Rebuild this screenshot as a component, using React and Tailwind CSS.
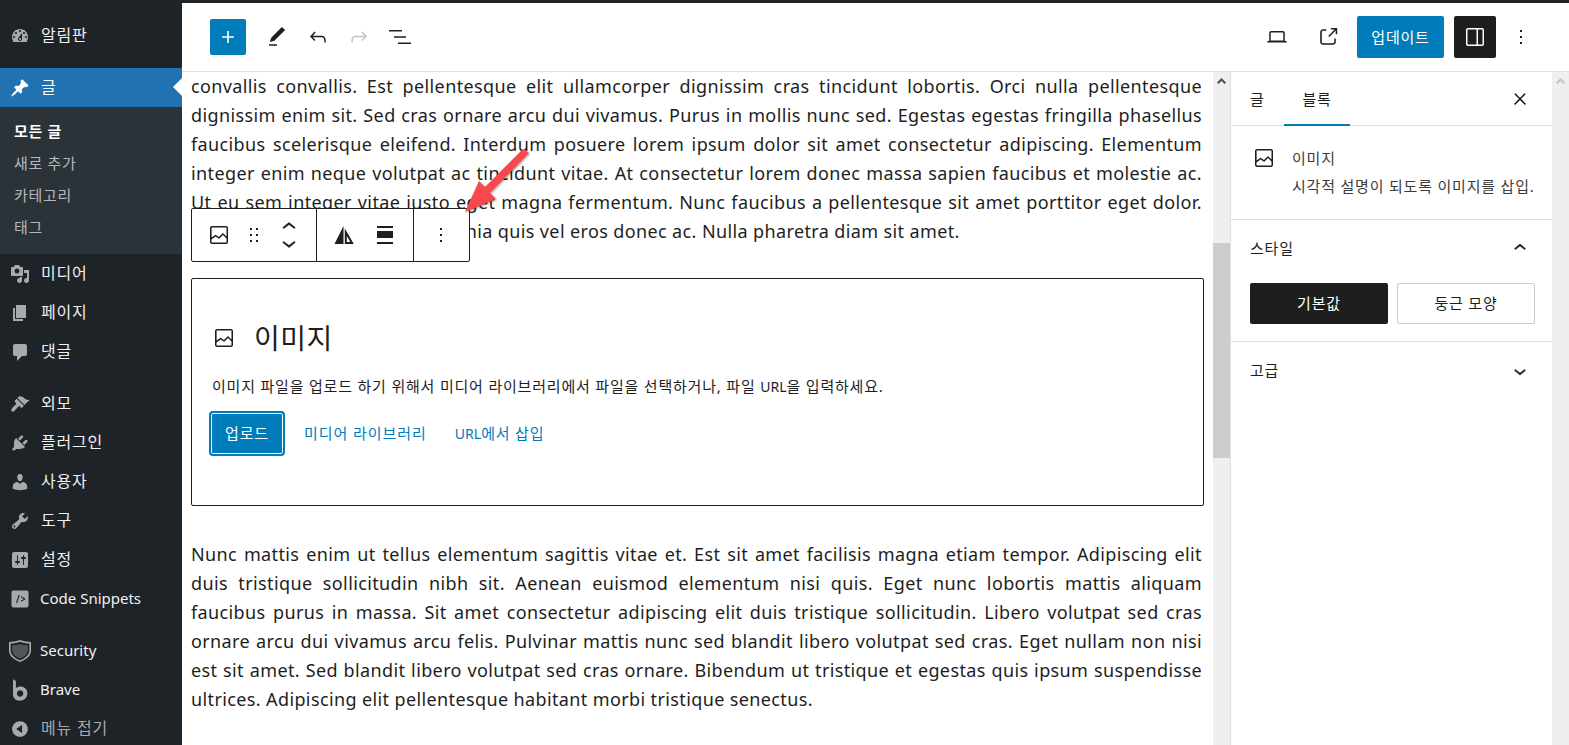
const bodyFont = "font-['Noto_Sans','Noto_Sans_CJK_KR',sans-serif]"

// wp block editor icons, 24 box
const Wp = ({ d, className = 'w-6 h-6', fill = 'currentColor' }) => (
  <svg viewBox="0 0 24 24" className={className} fill={fill} fillRule="evenodd">
    <path d={d} />
  </svg>
)

const icons = {
  plus: 'M18 11.2h-5.2V6h-1.6v5.2H6v1.6h5.2V18h1.6v-5.2H18z',
  pencil: 'M20.1 5.1L16.9 2 6.2 12.7l-1.3 4.4 4.5-1.3L20.1 5.1zM4 20.8h8v-1.5H4v1.5z',
  undo: 'M18.3 11.7c-.6-.6-1.4-.9-2.3-.9H6.7l2.9-3.3-1.1-1-4.5 5L8.5 16l1-1-2.7-2.7H16c.5 0 .9.2 1.3.5 1 1 1 3.4 1 4.5v.3h1.5v-.2c0-1.5 0-4.3-1.5-5.700z',
  redo: 'M15.6 6.5l-1.1 1 2.9 3.3H8c-.9 0-1.7.3-2.3.9-1.4 1.5-1.4 4.2-1.4 5.6v.2h1.5v-.3c0-1.1 0-3.5 1-4.5.3-.3.7-.5 1.3-.5h9.2L14.5 15l1.1 1.1 4.6-4.6-4.6-5z',
  list: 'M1 5h13v1.500H1zM6 11.300h12v1.500H6zM10 17.600h13v1.500H10z',
  laptop: 'M20.5 16h-.7V8c0-1.1-.9-2-2-2H6.2c-1.1 0-2 .9-2 2v8h-.7c-.8 0-1.5.7-1.5 1.500h20c0-.8-.7-1.500-1.500-1.500zM5.700 8c0-.3.2-.5.5-.5h11.600c.3 0 .5.2.5.5v7.600H5.700V8z',
  external: 'M18.2 17c0 .7-.6 1.2-1.2 1.2H7c-.7 0-1.2-.6-1.2-1.2V7c0-.7.6-1.2 1.2-1.2h3.2V4.200H7C5.500 4.200 4.200 5.500 4.200 7v10c0 1.500 1.200 2.800 2.800 2.800h10c1.500 0 2.800-1.200 2.800-2.800v-3.600h-1.500V17zM14.900 3v1.500h3.700l-6.400 6.400 1.100 1.100 6.400-6.400v3.700h1.500V3h-6.300z',
  panel: 'M19 3H5c-1.100 0-2 .9-2 2v14c0 1.100.9 2 2 2h14c1.100 0 2-.9 2-2V5c0-1.100-.9-2-2-2zM15 4.500h4c.3 0 .5.2.5.5v14c0 .3-.2.5-.5.5h-4v-15zM5 4.500h8.500v15H5c-.3 0-.5-.2-.5-.5V5c0-.3.2-.5.5-.5z',
  dots: 'M13 19h-2v-2h2v2zm0-6h-2v-2h2v2zm0-6h-2V5h2v2z',
  image: 'M19 3H5c-1.100 0-2 .9-2 2v14c0 1.100.9 2 2 2h14c1.100 0 2-.9 2-2V5c0-1.100-.9-2-2-2zM5 4.500h14c.3 0 .5.2.5.5v8.400l-3-2.900c-.3-.3-.8-.3-1 0L11.900 14 9 12c-.3-.2-.6-.2-.8 0l-3.600 2.600V5c-.1-.3.1-.5.4-.5zm14 15H5c-.3 0-.5-.2-.5-.5v-2.400l4.100-3 3 1.900c.3.2.7.2.9-.1L16 12l3.500 3.400V19c0 .3-.2.5-.5.5z',
  drag: 'M8 7h2V5H8v2zm0 6h2v-2H8v2zm0 6h2v-2H8v2zm6-14v2h2V5h-2zm0 8h2v-2h-2v2zm0 6h2v-2h-2v2z',
  up: 'M6.500 12.400L12 8l5.500 4.400-.9 1.200L12 10l-4.500 3.600-1-1.200z',
  down: 'M17.500 11.600L12 16l-5.500-4.400.9-1.200L12 14l4.500-3.600 1 1.200z',
  close: 'M13 11.800l6.100-6.300-1-1-6.100 6.200-6.100-6.200-1 1 6.100 6.300-6.500 6.700 1 1 6.500-6.600 6.500 6.600 1-1z',
  duotone: 'M11.500 3L2.500 21h9V3zM12.800 5.500V21h9L12.800 5.500zM14.800 13v6h3.500l-3.500-6z',
  wide: 'M4 3h16v2H4zM4 8h16v7H4zM4 19h16v2H4z',
}

// dashicons, 20 box
const dash = {
  dashboard: 'M3.76 16h12.48c1.1-1.37 1.76-3.11 1.76-5 0-4.42-3.58-8-8-8s-8 3.58-8 8c0 1.89.66 3.63 1.76 5zM10 4c.55 0 1 .45 1 1s-.45 1-1 1-1-.45-1-1 .45-1 1-1zM6 6c.55 0 1 .45 1 1s-.45 1-1 1-1-.45-1-1 .45-1 1-1zm8 0c.55 0 1 .45 1 1s-.45 1-1 1-1-.45-1-1 .45-1 1-1zm-5.37 5.55L12 7v6c0 1.1-.9 2-2 2s-2-.9-2-2c0-.57.24-1.08.63-1.45zM4 10c.55 0 1 .45 1 1s-.45 1-1 1-1-.45-1-1 .45-1 1-1zm12 0c.55 0 1 .45 1 1s-.45 1-1 1-1-.45-1-1 .45-1 1-1zm-5 3c0-.55-.45-1-1-1s-1 .45-1 1 .45 1 1 1 1-.45 1-1z',
  pin: 'M10.44 3.02l1.82-1.82 6.36 6.35-1.83 1.82c-1.05-.68-2.48-.57-3.41.36l-.75.75c-.92.93-1.04 2.35-.35 3.41l-1.83 1.82-2.41-2.41-2.8 2.79c-.42.42-3.38 2.71-3.8 2.29s1.86-3.39 2.28-3.81l2.79-2.79L4.1 9.36l1.83-1.82c1.05.69 2.48.57 3.4-.36l.75-.75c.93-.92 1.05-2.35.36-3.41z',
  media: 'M13 11V4c0-.55-.45-1-1-1h-1.67L9 1H5L3.67 3H2c-.55 0-1 .45-1 1v7c0 .55.45 1 1 1h10c.55 0 1-.45 1-1zM7 4.5c1.38 0 2.5 1.12 2.5 2.5S8.38 9.5 7 9.5 4.5 8.38 4.5 7 5.62 4.5 7 4.5zM14 6h5v10.5c0 1.38-1.12 2.5-2.5 2.5S14 17.88 14 16.5s1.12-2.5 2.5-2.5c.17 0 .34.02.5.05V9h-3V6zm-4 8.05V13h2v3.5c0 1.38-1.12 2.5-2.5 2.5S7 17.88 7 16.5 8.12 14 9.5 14c.17 0 .34.02.5.05z',
  page: 'M6 15V2h10v13H6zm-1 1h8v2H3V5h2v11z',
  comment: 'M5 2h10c1.1 0 2 .9 2 2v8c0 1.1-.9 2-2 2h-3l-5 5v-5H5c-1.1 0-2-.9-2-2V4c0-1.1.9-2 2-2z',
  brush: 'M14.48 11.06L7.41 3.99l1.5-1.5c.5-.56 2.3-.47 3.51.32 1.21.8 1.43 1.28 2.91 2.1 1.18.64 2.45 1.26 4.45.85zm-.71.71L6.7 4.7 4.93 6.47c-.39.39-.39 1.02 0 1.41l1.06 1.06c.39.39.39 1.03 0 1.42-.6.6-3.5 3.3-4.2 4.4-.6 1-.8 2 .1 2.7.8.6 1.8.2 2.6-.6 1.1-1 3.4-3.7 4-4.3.39-.39 1.03-.39 1.42 0l1.06 1.06c.39.39 1.02.39 1.41 0z',
  plug: 'M13.11 4.36L9.87 7.6 8 5.73l3.24-3.24c.35-.34 1.05-.2 1.56.32.52.51.66 1.21.31 1.55zm-8 1.77l.91-1.12 9.01 9.01-1.19.84c-.71.71-2.63 1.16-3.82 1.16H6.14L4.9 17.26c-.59.59-1.54.59-2.12 0-.59-.58-.59-1.53 0-2.12l1.24-1.24v-3.88c0-1.13.4-3.19 1.09-3.89zm7.26 3.97l3.24-3.24c.34-.35 1.04-.21 1.55.31.52.51.66 1.21.31 1.55l-3.24 3.25z',
  user: 'M10 9.25c-2.27 0-2.73-3.44-2.73-3.44C7 4.02 7.82 2 9.97 2c2.16 0 2.98 2.02 2.71 3.81 0 0-.41 3.44-2.68 3.44zm0 2.57L12.72 10c2.39 0 4.52 2.33 4.52 4.53v2.49s-3.65 1.13-7.24 1.13c-3.65 0-7.24-1.13-7.24-1.13v-2.49c0-2.25 1.94-4.48 4.47-4.48z',
  wrench: 'M16.68 9.77c-1.34 1.34-3.3 1.67-4.95.99l-5.41 6.52c-.99.99-2.59.99-3.58 0s-.99-2.59 0-3.57l6.52-5.42c-.68-1.65-.35-3.61.99-4.95 1.28-1.28 3.12-1.62 4.72-1.06l-2.89 2.89 2.82 2.82 2.86-2.87c.53 1.58.18 3.39-1.08 4.65zM3.81 16.21c.4.39 1.04.39 1.43 0 .4-.4.4-1.04 0-1.43-.39-.4-1.03-.4-1.43 0-.39.39-.39 1.03 0 1.43z',
  settings: 'M18 16V4c0-1.1-.9-2-2-2H4c-1.1 0-2 .9-2 2v12c0 1.1.9 2 2 2h12c1.1 0 2-.9 2-2zM8 11h1c.55 0 1 .45 1 1s-.45 1-1 1H8v1.5c0 .28-.22.5-.5.5s-.5-.22-.5-.5V13H6c-.55 0-1-.45-1-1s.45-1 1-1h1V5.5c0-.28.22-.5.5-.5s.5.22.5.5V11zm5-2h-1c-.55 0-1-.45-1-1s.45-1 1-1h1V5.5c0-.28.22-.5.5-.5s.5.22.5.5V7h1c.55 0 1 .45 1 1s-.45 1-1 1h-1v5.5c0 .28-.22.5-.5.5s-.5-.22-.5-.5V9z',
  code: 'M3.5 1.5h13c1.1 0 2 .9 2 2v13c0 1.1-.9 2-2 2h-13c-1.1 0-2-.9-2-2v-13c0-1.1.9-2 2-2zM8.600 6L6 14h1.200l2.600-8H8.600zM11 7.200v1.200L14 10l-3 1.600v1.200L15.200 10.600V9.400L11 7.200z',
  brave: 'M5 1l2.400 1.500v5.800C8.400 7.500 9.800 7 11.300 7c3.300 0 5.700 2.600 5.700 5.800 0 3.400-2.700 6.200-6.300 6.200C7 19 5 16.700 5 13.400V1zM10.900 10.300c-1.500 0-2.600 1.100-2.600 2.600s1.100 2.700 2.600 2.700 2.700-1.200 2.700-2.700-1.200-2.600-2.700-2.600z',
  collapse: 'M10 2.160c4.330 0 7.840 3.510 7.840 7.840s-3.510 7.840-7.840 7.840S2.160 14.330 2.160 10 5.710 2.160 10 2.160zm2 11.720V6.120L6.180 9.970z',
}

const Dash = ({ name, className = 'w-5 h-5 text-[#a7aaad]' }) => (
  <svg viewBox="0 0 20 20" className={className} fill="currentColor">
    <path d={dash[name]} fillRule="evenodd" />
  </svg>
)

// security plugin's shield, ring plus dim inner part
const Shield = () => (
  <svg viewBox="0 0 24 24" className="w-6 h-6 -ml-[1px]">
    <path fill="#a7aaad" fillRule="evenodd" d="M12 1c3.400 1.300 7 1.900 11 2v8.500c0 5-4.300 8.900-11 11.500C5.300 20.400 1 16.500 1 11.500V3c4-.1 7.600-.7 11-2zM12 2.800C9 3.900 5.900 4.500 2.600 4.600v6.900c0 4.200 3.600 7.500 9.400 9.800 5.800-2.300 9.400-5.600 9.400-9.800V4.600C18.100 4.500 15 3.900 12 2.800z" />
    <path fill="#50575c" d="M12 5c2.600.9 5.200 1.400 7.800 1.500v5c0 3.200-2.800 5.900-7.800 8-5-2.100-7.800-4.800-7.800-8v-5C6.800 6.400 9.400 5.900 12 5z" />
  </svg>
)

const MenuRow = ({ icon, label, latin = false, className = 'text-[#f0f0f1]' }) => (
  <div className={`h-[39px] shrink-0 flex items-center ${latin ? 'text-[15px]' : 'text-[16px] tracking-[0.8px]'} ${className}`}>
    <div className="w-[40px] flex justify-center shrink-0">
      {icon === 'shield' ? <Shield /> : icon === 'brave' ? (
        <Dash name="brave" className="w-6 h-6 -ml-[3px] text-[#a7aaad]" />
      ) : (
        <Dash name={icon} />
      )}
    </div>
    <span className={latin ? '' : 'pl-[1px] pb-[2px]'}>{label}</span>
  </div>
)

const SubRow = ({ children, className = '' }) => (
  <div className={`h-[32px] pl-[14px] flex items-center ${className}`}>{children}</div>
)

const Sidebar = () => (
  <div className="w-[182px] shrink-0 bg-[#1d2327] pt-[13px] flex flex-col">
    <MenuRow icon="dashboard" label="알림판" />
    <div className="h-[13px] shrink-0" />
    <div className="relative h-[39px] shrink-0 bg-[#2271b1] text-white flex items-center text-[16px] tracking-[0.8px]">
      <div className="w-[40px] flex justify-center shrink-0">
        <Dash name="pin" className="w-5 h-5 text-white" />
      </div>
      <span className="pl-[1px] pb-[2px]">글</span>
      <div className="absolute right-0 top-[10px] w-0 h-0 border-y-[9px] border-y-transparent border-r-[9px] border-r-white" />
    </div>
    <div className="shrink-0 bg-[#2c3338] pt-[8px] pb-[11px] text-[15px] tracking-[0.7px] text-[#b4b9be]">
      <SubRow className="text-white font-semibold">모든 글</SubRow>
      <SubRow>새로 추가</SubRow>
      <SubRow>카테고리</SubRow>
      <SubRow>태그</SubRow>
    </div>
    <MenuRow icon="media" label="미디어" />
    <MenuRow icon="page" label="페이지" />
    <MenuRow icon="comment" label="댓글" />
    <div className="h-[13px] shrink-0" />
    <MenuRow icon="brush" label="외모" />
    <MenuRow icon="plug" label="플러그인" />
    <MenuRow icon="user" label="사용자" />
    <MenuRow icon="wrench" label="도구" />
    <MenuRow icon="settings" label="설정" />
    <MenuRow icon="code" label="Code Snippets" latin />
    <div className="h-[13px] shrink-0" />
    <MenuRow icon="shield" label="Security" latin />
    <MenuRow icon="brave" label="Brave" latin />
    <MenuRow icon="collapse" label="메뉴 접기" className="text-[#a7aaad]" />
  </div>
)

const Header = () => (
  <div className="h-[69px] shrink-0 border-b border-[#e0e0e0] bg-white flex items-center pl-[28px] pr-[36px] text-[#1e1e1e]">
    <div className="w-9 h-9 rounded-[2px] bg-[#007cba] text-white flex items-center justify-center">
      <Wp d={icons.plus} />
    </div>
    <div className="ml-[19px] flex gap-[17px] items-center">
      <Wp d={icons.pencil} />
      <Wp d={icons.undo} />
      <Wp d={icons.redo} className="w-6 h-6 text-[#c4c4c4]" />
      <Wp d={icons.list} />
    </div>
    <div className="ml-auto flex items-center">
      <Wp d={icons.laptop} />
      <Wp d={icons.external} className="w-6 h-6 ml-[27px]" />
      <button className="ml-[17px] w-[87px] h-[42px] rounded-[2px] bg-[#007cba] text-white text-[15px] tracking-[0.8px]">업데이트</button>
      <div className="ml-[10px] w-[42px] h-[42px] rounded-[2px] bg-[#1e1e1e] text-white flex items-center justify-center">
        <Wp d={icons.panel} />
      </div>
      <Wp d={icons.dots} className="w-6 h-6 ml-[13px]" />
    </div>
  </div>
)

const topLines = [
  'convallis convallis. Est pellentesque elit ullamcorper dignissim cras tincidunt lobortis. Orci nulla pellentesque',
  'dignissim enim sit. Sed cras ornare arcu dui vivamus. Purus in mollis nunc sed. Egestas egestas fringilla phasellus',
  'faucibus scelerisque eleifend. Interdum posuere lorem ipsum dolor sit amet consectetur adipiscing. Elementum',
  'integer enim neque volutpat ac tincidunt vitae. At consectetur lorem donec massa sapien faucibus et molestie ac.',
  'Ut eu sem integer vitae justo eget magna fermentum. Nunc faucibus a pellentesque sit amet porttitor eget dolor.',
]

const bottomLines = [
  'Nunc mattis enim ut tellus elementum sagittis vitae et. Est sit amet facilisis magna etiam tempor. Adipiscing elit',
  'duis tristique sollicitudin nibh sit. Aenean euismod elementum nisi quis. Eget nunc lobortis mattis aliquam',
  'faucibus purus in massa. Sit amet consectetur adipiscing elit duis tristique sollicitudin. Libero volutpat sed cras',
  'ornare arcu dui vivamus arcu felis. Pulvinar mattis nunc sed blandit libero volutpat sed cras. Eget nullam non nisi',
  'est sit amet. Sed blandit libero volutpat sed cras ornare. Bibendum ut tristique et egestas quis ipsum suspendisse',
]

const Line = ({ children }) => (
  <div className="mr-[2px] h-[29px] overflow-hidden text-justify [text-align-last:justify] tracking-[0.38px]">{children}</div>
)

const BlockToolbar = () => (
  <div className="absolute left-[9px] top-[136px] w-[279px] h-[54px] bg-white border border-[#1e1e1e] rounded-[2px] flex text-[#1e1e1e]">
    <div className="w-[125px] border-r border-[#1e1e1e] flex items-center pl-[15px] shrink-0">
      <Wp d={icons.image} />
      <Wp d={icons.drag} className="w-6 h-6 ml-[11px]" />
      <div className="ml-[9px] flex flex-col">
        <Wp d={icons.up} className="w-7 h-7 stroke-current stroke-[0.15]" />
        <Wp d={icons.down} className="w-7 h-7 -mt-[12px] stroke-current stroke-[0.15]" />
      </div>
    </div>
    <div className="w-[97px] border-r border-[#1e1e1e] flex items-center pl-[15px] gap-[17px] shrink-0">
      <Wp d={icons.duotone} />
      <Wp d={icons.wide} />
    </div>
    <div className="flex-1 flex items-center justify-center pr-[2px]">
      <Wp d={icons.dots} />
    </div>
  </div>
)

const RedArrow = () => (
  <svg className="absolute left-[280px] top-[76px] w-[70px] h-[70px] drop-shadow-[1px_1px_1px_rgba(0,0,0,0.35)]" viewBox="0 0 70 70" fill="#f9474d">
    <path d="M3 64L17 33 23 39 61 1 67 5 28 45 34 51z" />
  </svg>
)

const ImagePlaceholder = () => (
  <div className="mt-[32px] h-[228px] border border-[#1e1e1e] rounded-[2px] pl-[20px] pt-[41px] text-[#1e1e1e]">
    <div className="flex items-center h-[36px]">
      <Wp d={icons.image} />
      <span className="ml-[18px] text-[28px] tracking-[0.5px] leading-none">이미지</span>
    </div>
    <div className="mt-[20px] text-[15px] tracking-[0.8px] leading-[20px]">
      이미지 파일을 업로드 하기 위해서 미디어 라이브러리에서 파일을 선택하거나, 파일 <span className="text-[14px] tracking-normal">URL</span>을 입력하세요.
    </div>
    <div className="mt-[14px] flex items-center text-[15px] tracking-[0.8px] text-[#007cba]">
      <button className="-ml-[3px] w-[76px] h-[45px] shrink-0 rounded-[4px] bg-[#007cba] text-white border-2 border-[#007cba] shadow-[inset_0_0_0_1px_white]">업로드</button>
      <span className="ml-[19px] tracking-[0.95px]">미디어 라이브러리</span>
      <span className="ml-[28px]"><span className="text-[14px] tracking-normal">URL</span>에서 삽입</span>
    </div>
  </div>
)

const Editor = () => (
  <div className="relative flex-1 min-w-0 overflow-hidden pl-[9px] pr-[9px] text-[18px] leading-[29px] text-[#1e1e1e]">
    {topLines.map((l) => <Line key={l}>{l}</Line>)}
    <div className="h-[29px] whitespace-nowrap tracking-[0.38px]">Mattis tortor condimentum lacinia quis vel eros donec ac. Nulla pharetra diam sit amet.</div>
    <ImagePlaceholder />
    <div className="mt-[34px]">
      {bottomLines.map((l) => <Line key={l}>{l}</Line>)}
      <div className="h-[29px] whitespace-nowrap tracking-[0.38px]">ultrices. Adipiscing elit pellentesque habitant morbi tristique senectus.</div>
    </div>
    <BlockToolbar />
    <RedArrow />
  </div>
)

const ScrollArrow = ({ className }) => (
  <div className="h-[17px] flex items-center justify-center">
    <svg viewBox="0 0 9 6" className={`w-[9px] h-[6px] ${className}`} fill="currentColor">
      <path d="M4.500 0L9 4.500 7.500 6 4.500 3 1.500 6 0 4.500z" />
    </svg>
  </div>
)

const Settings = () => (
  <div className="w-[322px] shrink-0 border-l border-[#e0e0e0] text-[15px] tracking-[0.8px] text-[#1e1e1e] bg-white flex flex-col">
    <div className="h-[54px] shrink-0 border-b border-[#e0e0e0] flex items-center relative">
      <span className="ml-[19px] pt-[2px]">글</span>
      <div className="absolute left-[53px] top-0 w-[66px] h-[54px] pt-[2px] border-b-2 border-[#007cba] flex items-center justify-center">블록</div>
      <Wp d={icons.close} className="w-[18px] h-[18px] absolute right-[23px] top-[18px] stroke-current stroke-[0.8]" />
    </div>
    <div className="h-[94px] shrink-0 border-b border-[#e0e0e0] flex pl-[21px] pt-[20px]">
      <Wp d={icons.image} />
      <div className="ml-[16px] whitespace-nowrap">
        <div className="leading-[24px] text-[#3c3c3c]">이미지</div>
        <div className="mt-[4px] leading-[24px] text-[#3c3c3c]">시각적 설명이 되도록 이미지를 삽입.</div>
      </div>
    </div>
    <div className="h-[122px] shrink-0 border-b border-[#e0e0e0] pl-[19px] pr-[17px]">
      <div className="h-[58px] pb-[2px] flex items-center justify-between pr-[3px]">
        <span>스타일</span>
        <Wp d={icons.up} className="w-6 h-6 stroke-current stroke-[0.5]" />
      </div>
      <div className="mt-[5px] flex gap-[9px]">
        <div className="w-[138px] h-[41px] shrink-0 rounded-[2px] bg-[#1e1e1e] text-white flex items-center justify-center">기본값</div>
        <div className="w-[138px] h-[41px] shrink-0 rounded-[2px] border border-[#cccccc] flex items-center justify-center">둥근 모양</div>
      </div>
    </div>
    <div className="h-[58px] shrink-0 pl-[19px] pr-[20px] flex items-center justify-between">
      <span className="-mt-[2px]">고급</span>
      <Wp d={icons.down} className="w-6 h-6 stroke-current stroke-[0.5]" />
    </div>
  </div>
)

export default function App() {
  return (
    <div className={`w-full h-[745px] overflow-hidden flex flex-col bg-white ${bodyFont}`}>
      <div className="h-[3px] shrink-0 bg-[#1d2327]" />
      <div className="flex flex-1 min-h-0">
        <Sidebar />
        <div className="flex-1 min-w-0 flex flex-col">
          <Header />
          <div className="flex flex-1 min-h-0">
            <Editor />
            <div className="w-[17px] shrink-0 bg-[#efefef] flex flex-col">
              <ScrollArrow className="text-[#505050]" />
              <div className="h-[154px]" />
              <div className="h-[215px] bg-[#cdcdcd]" />
            </div>
            <Settings />
            <div className="w-[17px] shrink-0 bg-[#efefef]">
              <ScrollArrow className="text-[#c4c4c4]" />
            </div>
          </div>
        </div>
      </div>
    </div>
  )
}
